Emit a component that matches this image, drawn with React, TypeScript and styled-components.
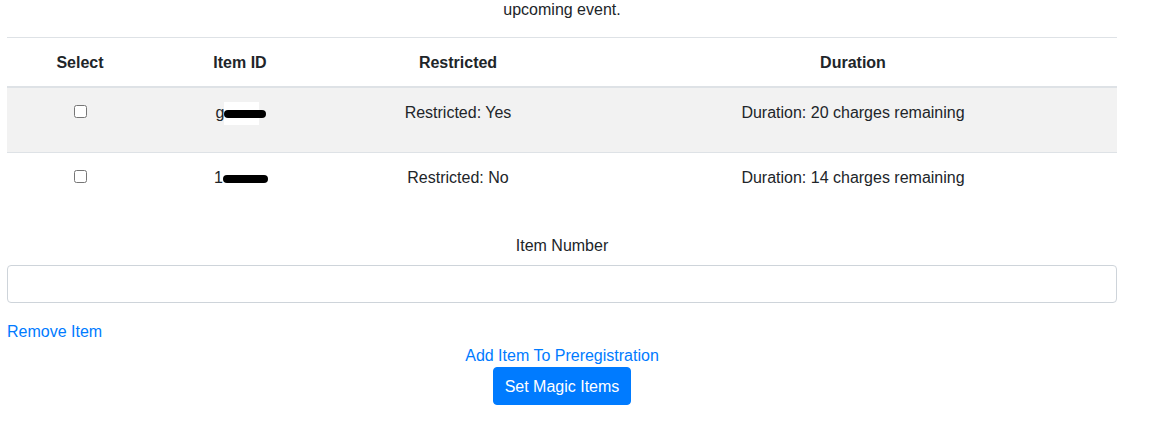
import React, { useState } from "react";
import styled, { createGlobalStyle } from "styled-components";

const GlobalStyle = createGlobalStyle`
  html, body {
    margin: 0;
    padding: 0;
    background: #fff;
  }
  body {
    font-family: "Segoe UI", "Liberation Sans", Arial, sans-serif;
    font-size: 16px;
    line-height: 1.5;
    color: #212529;
  }
`;

interface Item {
  id: string;
  prefix: string;
  barWidth: number;
  maskWidth?: number;
  restricted: boolean;
  charges: number;
  tall?: boolean;
}

const items: Item[] = [
  { id: "g", prefix: "g", barWidth: 42, maskWidth: 35, restricted: true, charges: 20, tall: true },
  { id: "1", prefix: "1", barWidth: 45, restricted: false, charges: 14 }
];

const App = () => {
  const [selected, setSelected] = useState<string[]>([]);
  const [itemNumber, setItemNumber] = useState("");

  const toggle = (id: string) => {
    setSelected(prev =>
      prev.includes(id) ? prev.filter(s => s !== id) : [...prev, id]
    );
  };

  return (
    <StyledPage>
      <GlobalStyle />
      <Intro>upcoming event.</Intro>
      <Table>
        <colgroup>
          <col style={{ width: 146 }} />
          <col style={{ width: 174 }} />
          <col style={{ width: 262 }} />
          <col />
        </colgroup>
        <thead>
          <tr>
            <Th>Select</Th>
            <Th>Item ID</Th>
            <Th>Restricted</Th>
            <Th>Duration</Th>
          </tr>
        </thead>
        <tbody>
          {items.map((item, i) => (
            <Row key={item.id} $striped={i % 2 === 0}>
              <Td $tall={item.tall}>
                <Check
                  type="checkbox"
                  checked={selected.includes(item.id)}
                  onChange={() => toggle(item.id)}
                />
              </Td>
              <Td $tall={item.tall}>
                <ItemId>
                  {item.prefix}
                  <Redacted>
                    {item.maskWidth && <Mask style={{ width: item.maskWidth }} />}
                    <Bar style={{ width: item.barWidth }} />
                  </Redacted>
                </ItemId>
              </Td>
              <Td $tall={item.tall}>
                Restricted: {item.restricted ? "Yes" : "No"}
              </Td>
              <Td $tall={item.tall}>
                Duration: {item.charges} charges remaining
              </Td>
            </Row>
          ))}
        </tbody>
      </Table>

      <FormGroup>
        <Label htmlFor="item-number">Item Number</Label>
        <Input
          id="item-number"
          type="text"
          value={itemNumber}
          onChange={e => setItemNumber(e.target.value)}
        />
      </FormGroup>

      <LinkButton $align="left">Remove Item</LinkButton>
      <LinkButton $align="center">Add Item To Preregistration</LinkButton>
      <Actions>
        <PrimaryButton>Set Magic Items</PrimaryButton>
      </Actions>
    </StyledPage>
  );
};

const StyledPage = styled.div`
  width: 1110px;
  padding: 0 7px;
`;

const Intro = styled.p`
  margin: -2px 0 15px;
  text-align: center;
`;

const Table = styled.table`
  width: 100%;
  border-collapse: collapse;
  margin-bottom: 33px;
`;

const Th = styled.th`
  padding: 13px 12px 11px;
  text-align: center;
  font-weight: 700;
  border-top: 1px solid #dee2e6;
  border-bottom: 2px solid #dee2e6;
  vertical-align: bottom;
`;

const Row = styled.tr<{ $striped?: boolean }>`
  background: ${p => (p.$striped ? "#f2f2f2" : "transparent")};
`;

const Td = styled.td<{ $tall?: boolean }>`
  padding: 13px 12px 11px;
  text-align: center;
  vertical-align: top;
  border-top: 1px solid #dee2e6;
  height: ${p => (p.$tall ? "40px" : "24px")};
`;

const Check = styled.input`
  margin: 4px 0 0;
  width: 13px;
  height: 13px;
  vertical-align: top;
`;

const ItemId = styled.span`
  display: inline-flex;
  align-items: flex-start;
  height: 24px;
  margin-left: 2px;
`;

const Redacted = styled.span`
  position: relative;
  display: block;
  height: 24px;
`;

/* white paste-over box behind the black marker stroke */
const Mask = styled.span`
  position: absolute;
  left: 0;
  top: 1px;
  height: 23px;
  background: #fff;
`;

const Bar = styled.span`
  position: relative;
  display: block;
  height: 8px;
  margin-top: 9px;
  background: #000;
  border-radius: 4px;
`;

const FormGroup = styled.div`
  display: flex;
  flex-direction: column;
  align-items: center;
  margin-bottom: 16px;
`;

const Label = styled.label`
  margin-bottom: 7px;
`;

const Input = styled.input`
  box-sizing: border-box;
  width: 100%;
  height: 38px;
  padding: 6px 12px;
  font: inherit;
  color: #495057;
  background: #fff;
  border: 1px solid #ced4da;
  border-radius: 4px;
  outline: none;
`;

const LinkButton = styled.a<{ $align: "left" | "center" }>`
  display: block;
  padding-top: 1px;
  line-height: 23px;
  text-align: ${p => p.$align};
  color: #007bff;
  cursor: pointer;
  text-decoration: none;
`;

const Actions = styled.div`
  display: flex;
  justify-content: center;
`;

const PrimaryButton = styled.button`
  height: 38px;
  padding: 1px 11px 0;
  font: inherit;
  color: #fff;
  background: #007bff;
  border: 1px solid #007bff;
  border-radius: 4px;
  cursor: pointer;
`;

export default App;
